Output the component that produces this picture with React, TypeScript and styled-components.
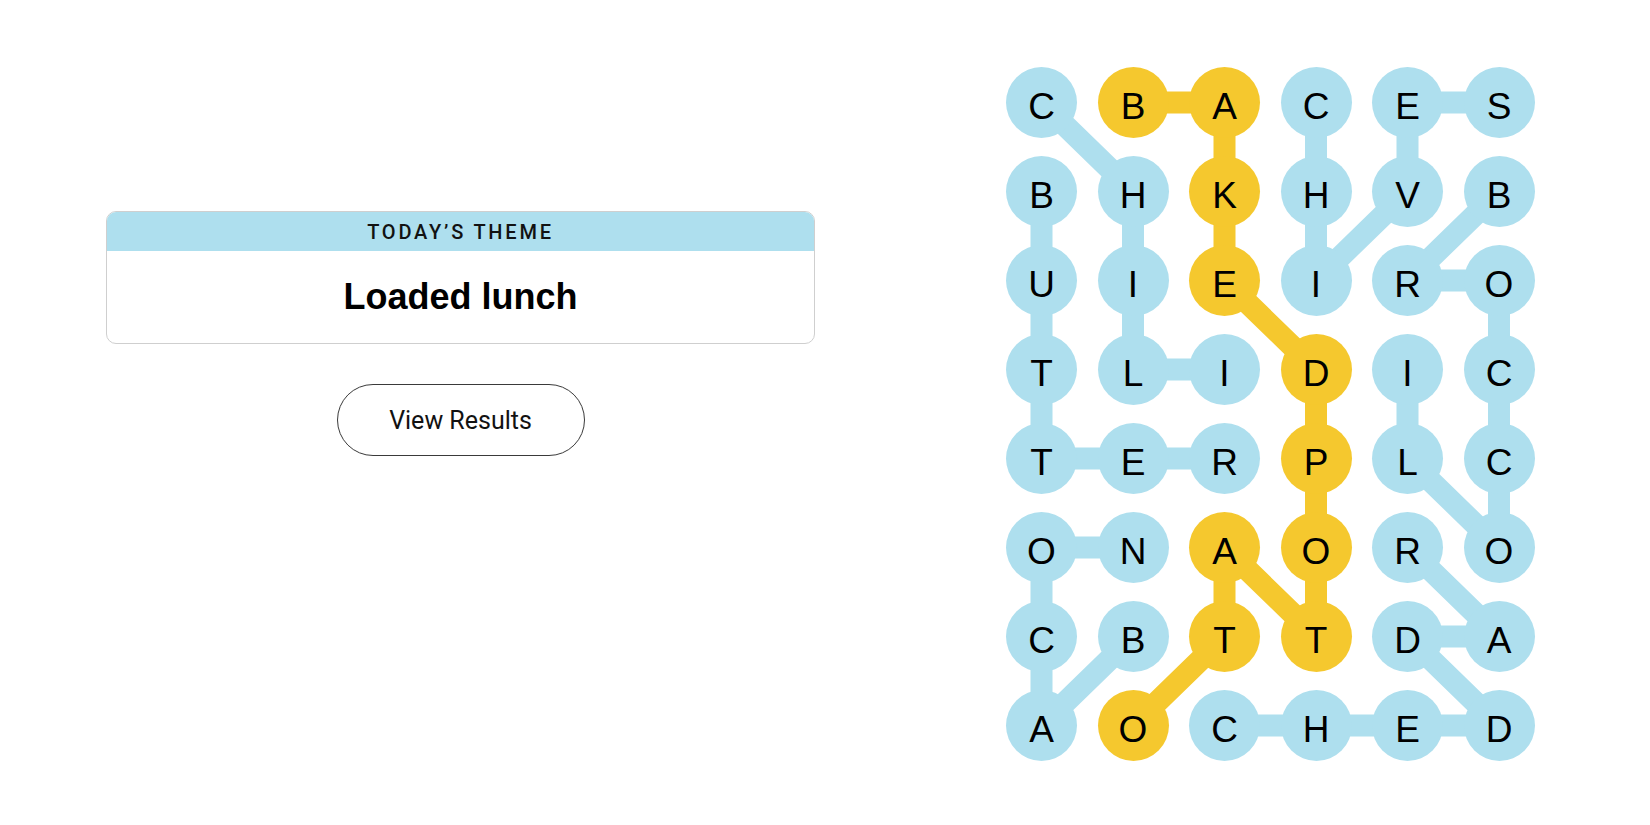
import React from "react";
import styled, { createGlobalStyle } from "styled-components";

const GlobalStyle = createGlobalStyle`
  html, body { margin: 0; padding: 0; background: #ffffff; }
  body { font-family: "Liberation Sans", Arial, sans-serif; color: #121212; }
`;

const BLUE = "#aedfee";
const YELLOW = "#f5c82e";
const CELL = 71;
const COL_PITCH = 91.5;
const ROW_PITCH = 89;

const LETTERS = ["CBACES", "BHKHVB", "UIEIRO", "TLIDIC", "TERPLC", "ONAORO", "CBTTDA", "AOCHED"];

type Pt = [number, number];
interface Word { spangram?: boolean; path: Pt[] }

const WORDS: Word[] = [
  { spangram: true, path: [[0, 1], [0, 2], [1, 2], [2, 2], [3, 3], [4, 3], [5, 3], [6, 3], [5, 2], [6, 2], [7, 1]] },
  { path: [[0, 0], [1, 1], [2, 1], [3, 1], [3, 2]] },
  { path: [[1, 0], [2, 0], [3, 0], [4, 0], [4, 1], [4, 2]] },
  { path: [[6, 1], [7, 0], [6, 0], [5, 0], [5, 1]] },
  { path: [[0, 3], [1, 3], [2, 3], [1, 4], [0, 4], [0, 5]] },
  { path: [[1, 5], [2, 4], [2, 5], [3, 5], [4, 5], [5, 5], [4, 4], [3, 4]] },
  { path: [[7, 2], [7, 3], [7, 4], [7, 5], [6, 4], [6, 5], [5, 4]] },
];

const spangramCells = new Set(WORDS.filter(w => w.spangram).flatMap(w => w.path.map(([r, c]) => `${r}-${c}`)));

const Page = styled.main`
  display: flex;
  align-items: flex-start;
  gap: 191px;
  padding: 67px 0 0 106px;
  height: 825px;
  box-sizing: border-box;
`;

const LeftColumn = styled.section`
  width: 709px;
  margin-top: 144px;
  display: flex;
  flex-direction: column;
  align-items: center;
  gap: 40px;
`;

const ThemeCard = styled.div`
  width: 100%;
  border: 1px solid #cfcfcf;
  border-radius: 10px;
  overflow: hidden;
  box-sizing: border-box;
  background: #fff;
`;

const ThemeHeader = styled.div`
  background: ${BLUE};
  height: 39px;
  display: flex;
  align-items: center;
  justify-content: center;
  font-family: Roboto, "Liberation Sans", sans-serif;
  font-weight: 500;
  font-size: 20px;
  letter-spacing: 2.8px;
  color: #121212;
`;

const ThemeBody = styled.div`
  height: 92px;
  display: flex;
  align-items: center;
  justify-content: center;
  font-family: "Liberation Sans", Arial, sans-serif;
  font-weight: 700;
  font-size: 36px;
  color: #000;
`;

const ResultsButton = styled.button`
  width: 248px;
  height: 72px;
  border: 1px solid #3a3a3a;
  border-radius: 36px;
  background: #fff;
  color: #121212;
  font-family: Roboto, "Liberation Sans", Arial, sans-serif;
  font-size: 25px;
  letter-spacing: 0;
  cursor: pointer;
  padding: 0;
`;

const Board = styled.div`
  position: relative;
  width: ${CELL * 6 + (COL_PITCH - CELL) * 5}px;
  height: ${CELL * 8 + (ROW_PITCH - CELL) * 7}px;
`;

const Connectors = styled.svg`
  position: absolute;
  inset: 0;
  width: 100%;
  height: 100%;
  z-index: 0;
`;

const LetterGrid = styled.div`
  position: relative;
  z-index: 1;
  display: grid;
  grid-template-columns: repeat(6, ${CELL}px);
  grid-auto-rows: ${CELL}px;
  column-gap: ${COL_PITCH - CELL}px;
  row-gap: ${ROW_PITCH - CELL}px;
`;

const LetterCell = styled.div<{ $spangram: boolean }>`
  width: ${CELL}px;
  height: ${CELL}px;
  border-radius: 50%;
  background: ${p => (p.$spangram ? YELLOW : BLUE)};
  display: flex;
  align-items: center;
  justify-content: center;
  box-sizing: border-box;
  padding-top: 7px;
  font-family: "Liberation Sans", Arial, sans-serif;
  font-size: 37px;
  color: #000;
  line-height: 1;
`;

const cx = (c: number) => c * COL_PITCH + CELL / 2;
const cy = (r: number) => r * ROW_PITCH + CELL / 2;

export default function App() {
  return (
    <>
      <GlobalStyle />
      <Page>
        <LeftColumn>
          <ThemeCard>
            <ThemeHeader>TODAY’S THEME</ThemeHeader>
            <ThemeBody>Loaded lunch</ThemeBody>
          </ThemeCard>
          <ResultsButton>View Results</ResultsButton>
        </LeftColumn>
        <Board>
          <Connectors>
            {WORDS.map((w, i) => (
              <polyline
                key={i}
                points={w.path.map(([r, c]) => `${cx(c)},${cy(r)}`).join(" ")}
                fill="none"
                stroke={w.spangram ? YELLOW : BLUE}
                strokeWidth={22}
                strokeLinejoin="round"
              />
            ))}
          </Connectors>
          <LetterGrid>
            {LETTERS.flatMap((row, r) =>
              row.split("").map((ch, c) => (
                <LetterCell key={`${r}-${c}`} $spangram={spangramCells.has(`${r}-${c}`)}>
                  {ch}
                </LetterCell>
              ))
            )}
          </LetterGrid>
        </Board>
      </Page>
    </>
  );
}
